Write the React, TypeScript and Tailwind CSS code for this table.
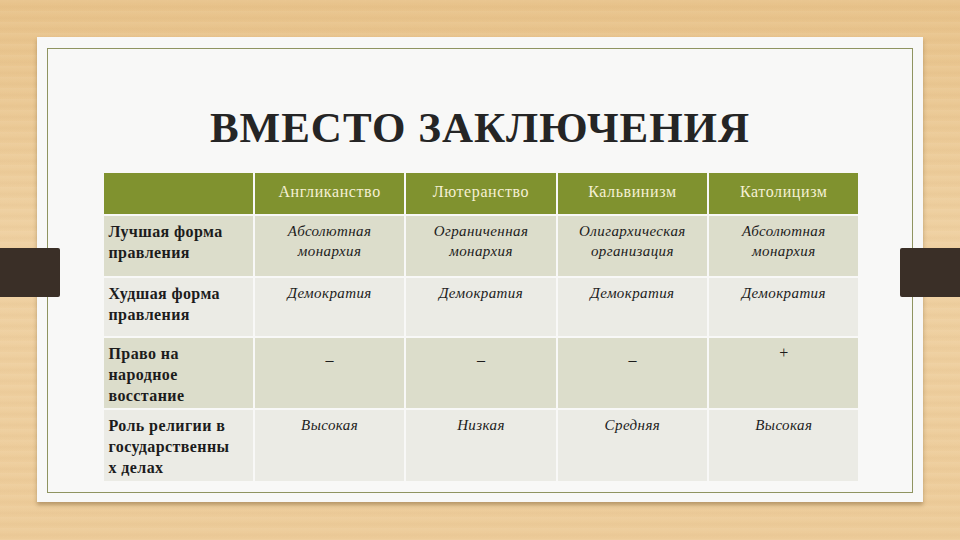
import React from "react";

const serif = "font-['Liberation_Serif','Times_New_Roman',serif]";

const cols = ["Англиканство", "Лютеранство", "Кальвинизм", "Католицизм"];

type Row = { head: React.ReactNode; cells: React.ReactNode[]; bg: string; h: string; italic?: boolean };

const rows: Row[] = [
  {
    head: <>Лучшая форма<br />правления</>,
    cells: [
      <>Абсолютная<br />монархия</>,
      <>Ограниченная<br />монархия</>,
      <>Олигархическая<br />организация</>,
      <>Абсолютная<br />монархия</>,
    ],
    bg: "bg-[#dcddcb]",
    h: "h-[60px]",
    italic: true,
  },
  {
    head: <>Худшая форма<br />правления</>,
    cells: ["Демократия", "Демократия", "Демократия", "Демократия"],
    bg: "bg-[#ebebe5]",
    h: "h-[58px]",
    italic: true,
  },
  {
    head: <>Право на<br />народное<br />восстание</>,
    cells: [
      <span className="inline-block pt-[7px]">–</span>,
      <span className="inline-block pt-[7px]">–</span>,
      <span className="inline-block pt-[7px]">–</span>,
      "+",
    ],
    bg: "bg-[#dcddcb]",
    h: "h-[70px]",
  },
  {
    head: <>Роль религии в<br />государственны<br />х делах</>,
    cells: ["Высокая", "Низкая", "Средняя", "Высокая"],
    bg: "bg-[#ebebe5]",
    h: "h-[71px]",
    italic: true,
  },
];

export default function App() {
  return (
    <div className="relative w-[960px] h-[540px] overflow-hidden bg-[#ebc893] bg-[repeating-linear-gradient(180deg,rgba(255,255,255,0.05)_0px,rgba(255,255,255,0)_4px,rgba(160,100,40,0.04)_7px,rgba(255,255,255,0)_11px),linear-gradient(180deg,#e8c38b_0%,#efd1a2_45%,#edcc9a_100%)] pt-[37px] pl-[37px]">
      <div className="w-[886px] h-[465px] bg-[#f8f8f7] shadow-[0_3px_4px_rgba(90,60,20,0.35)] pt-[11px] px-[10px]">
        <div className="h-[445px] border border-[#8f9460] flex flex-col items-center">
          <h1 className={`${serif} mt-[58px] text-[43px] leading-[42px] font-bold text-[#252525] tracking-[1px]`}>
            ВМЕСТО ЗАКЛЮЧЕНИЯ
          </h1>
          <div className="mt-[24px] w-[755px] flex flex-col gap-[2px] ml-[2px]">
            <div className="grid grid-cols-5 gap-[2px] h-[41px]">
              <div className="bg-[#80922f]" />
              {cols.map((c) => (
                <div
                  key={c}
                  className={`${serif} min-w-0 bg-[#80922f] text-[#f5f0d4] text-[16px] text-center pt-[7px] tracking-[0.6px]`}
                >
                  {c}
                </div>
              ))}
            </div>
            {rows.map((r, i) => (
              <div key={i} className={`grid grid-cols-5 gap-[2px] ${r.h}`}>
                <div className={`${serif} min-w-0 whitespace-nowrap ${r.bg} text-[#1c1c1c] text-[16px] font-bold leading-[21px] pl-[5px] pt-[5px] tracking-[0.4px]`}>
                  {r.head}
                </div>
                {r.cells.map((c, j) => (
                  <div
                    key={j}
                    className={`${serif} min-w-0 ${r.bg} text-[#1c1c1c] text-center leading-[20px] pt-[5px] ${r.italic ? "italic text-[15px] tracking-[0.4px]" : "text-[16px]"}`}
                  >
                    {c}
                  </div>
                ))}
              </div>
            ))}
          </div>
        </div>
      </div>
      <div className="absolute left-0 top-[248px] w-[60px] h-[49px] bg-[#3a2f27] rounded-r-[2px]" />
      <div className="absolute right-0 top-[248px] w-[60px] h-[49px] bg-[#3a2f27] rounded-l-[2px]" />
    </div>
  );
}
